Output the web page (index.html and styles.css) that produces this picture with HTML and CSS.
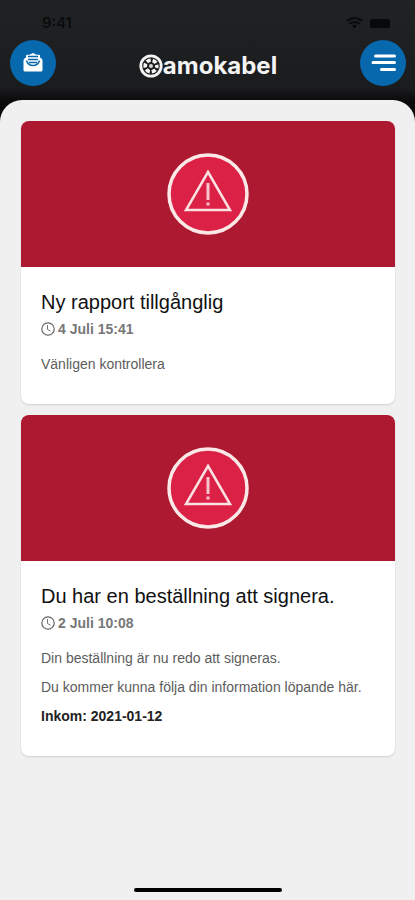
FILE: index.html
```html
<!DOCTYPE html>
<html lang="sv">
<head>
  <meta charset="utf-8">
  <meta name="viewport" content="width=device-width, initial-scale=1">
  <title>Amokabel</title>
  <link rel="stylesheet" href="styles.css">
</head>
<body>
  <header class="top">
    <div class="status">
      <span class="status-time">9:41</span>
      <svg class="status-icons" viewBox="0 0 46 14" width="46" height="14" aria-hidden="true">
        <path d="M1 5q7.500-6 15 0M3.500 8q5-4 10 0" fill="none" stroke="#08090a" stroke-width="2"/>
        <path d="M6 9.500q2.500-1.500 5 0L8.500 12.500z" fill="#08090a"/>
        <rect x="24" y="3" width="20" height="9" rx="2" fill="#08090a"/>
      </svg>
    </div>
    <div class="bar">
      <button class="round" type="button" aria-label="Meddelanden">
        <svg viewBox="0 0 20 20" width="20" height="20" aria-hidden="true">
          <path d="M0.500 7.500Q0.500 6 2 5L3 4.400V2.500Q3 1.700 4 1.700H6.500L10 0 13.500 1.700H16Q17 1.700 17 2.500V4.400L18 5Q19.500 6 19.500 7.500V17Q19.500 18.500 18 18.500H2Q0.500 18.500 0.500 17Z" fill="#fff"/>
          <path d="M5 3.500H15M3.500 7.500Q5 12.500 10 12.500Q15 12.500 16.500 7.500" fill="none" stroke="#0868ae" stroke-width="1.500"/>
          <path d="M5 6.500H15M6 9.500H14" stroke="#0868ae" stroke-width="1.500"/>
        </svg>
      </button>
      <div class="logo">
        <svg viewBox="0 0 24 24" width="24" height="24" aria-hidden="true">
          <circle cx="12" cy="12" r="10.200" fill="none" stroke="#f4f4f4" stroke-width="2.800"/>
          <circle cx="12" cy="12" r="5.800" fill="none" stroke="#f4f4f4" stroke-width="3.600" stroke-dasharray="4.074 2" stroke-dashoffset="2.037"/>
          <circle cx="12" cy="12" r="2" fill="#d8d8d8"/>
        </svg>
        <span>amokabel</span>
      </div>
      <button class="round" type="button" aria-label="Meny">
        <svg viewBox="0 0 26 20" width="26" height="20" aria-hidden="true">
          <path d="M5.500 3H24.500M3 9.500H24.500M11.500 16.500H24.500" stroke="#fff" stroke-width="3" stroke-linecap="round"/>
        </svg>
      </button>
    </div>
  </header>

  <main class="sheet">
    <article class="card">
      <div class="banner">
        <svg viewBox="0 0 82 82" width="82" height="82" aria-hidden="true">
          <circle cx="41" cy="41" r="39" fill="#dc2147" stroke="#fbe9e7" stroke-width="3.500"/>
          <path d="M41 19L63 57H19Z" fill="none" stroke="#fbe2e2" stroke-width="2.500"/>
          <path d="M41 30V47M41 49.500V52.500" stroke="#f8c4cd" stroke-width="3"/>
        </svg>
      </div>
      <div class="body">
        <h2>Ny rapport tillgånglig</h2>
        <div class="date">
          <svg viewBox="0 0 14 14" width="14" height="14" aria-hidden="true">
            <circle cx="7" cy="7" r="6.200" fill="none" stroke="#666" stroke-width="1.200"/>
            <path d="M6.500 3V7.500L9.500 9" fill="none" stroke="#777"/>
          </svg>
          <time>4 Juli 15:41</time>
        </div>
        <p>Vänligen kontrollera</p>
      </div>
    </article>

    <article class="card">
      <div class="banner">
        <svg viewBox="0 0 82 82" width="82" height="82" aria-hidden="true">
          <circle cx="41" cy="41" r="39" fill="#dc2147" stroke="#fbe9e7" stroke-width="3.500"/>
          <path d="M41 19L63 57H19Z" fill="none" stroke="#fbe2e2" stroke-width="2.500"/>
          <path d="M41 30V47M41 49.500V52.500" stroke="#f8c4cd" stroke-width="3"/>
        </svg>
      </div>
      <div class="body">
        <h2>Du har en beställning att signera.</h2>
        <div class="date">
          <svg viewBox="0 0 14 14" width="14" height="14" aria-hidden="true">
            <circle cx="7" cy="7" r="6.200" fill="none" stroke="#666" stroke-width="1.200"/>
            <path d="M6.500 3V7.500L9.500 9" fill="none" stroke="#777"/>
          </svg>
          <time>2 Juli 10:08</time>
        </div>
        <p>Din beställning är nu redo att signeras.</p>
        <p>Du kommer kunna följa din information löpande här.</p>
        <p class="strong">Inkom: 2021-01-12</p>
      </div>
    </article>
    <div class="home"></div>
  </main>
</body>
</html>
```
FILE: styles.css
```css
* {
  box-sizing: border-box;
}

body {
  margin: 0;
  min-height: 100vh;
  display: flex;
  flex-direction: column;
  background: linear-gradient(#202224, #1b1c1e 88px, #0c0c0c 100px, #000 130px);
  font-family: "Liberation Sans", Arial, sans-serif;
}

.top {
  height: 100px;
  padding: 14px 9px 0 10px;
}

.status {
  display: flex;
  justify-content: space-between;
  align-items: center;
  height: 18px;
  padding: 0 14px 0 32px;
  color: #08090a;
}

.status-time {
  font: 500 15px/18px Inter, sans-serif;
}

.bar {
  display: flex;
  justify-content: space-between;
  align-items: center;
  height: 62px;
}

.round {
  display: flex;
  align-items: center;
  justify-content: center;
  width: 46px;
  height: 46px;
  padding: 0;
  border: 0;
  border-radius: 50%;
  background: #0868ae;
}

.logo {
  display: flex;
  align-items: center;
  padding-top: 6px;
  color: #f4f4f4;
  font: 700 24px/28px Inter, sans-serif;
}

.sheet {
  flex: 1;
  display: flex;
  flex-direction: column;
  gap: 11px;
  padding: 21px 20px 8px;
  border-radius: 22px 22px 0 0;
  background: #f0f0f0;
}

.card {
  overflow: hidden;
  margin: 0 0 0 1px;
  border-radius: 8px;
  background: #fff;
  box-shadow: 0 1px 2px #0002;
}

.banner {
  display: flex;
  align-items: center;
  justify-content: center;
  height: 146px;
  background: #ae1932;
}

.body {
  padding: 22px 20px 30px;
}

h2 {
  margin: 0;
  color: #111;
  font-size: 20px;
  line-height: 26px;
  font-weight: 400;
}

.date {
  display: flex;
  align-items: center;
  gap: 3px;
  margin: 4px 0 15px;
  color: #777;
  font-size: 14px;
  line-height: 20px;
  font-weight: 700;
}

p {
  margin: 9px 0 0;
  color: #5c5c5c;
  font-size: 14px;
  line-height: 20px;
}

.strong {
  color: #222;
  font-weight: 700;
}

.home {
  width: 148px;
  height: 4px;
  margin: auto auto 0;
  border-radius: 2px;
  background: #000;
}
```
